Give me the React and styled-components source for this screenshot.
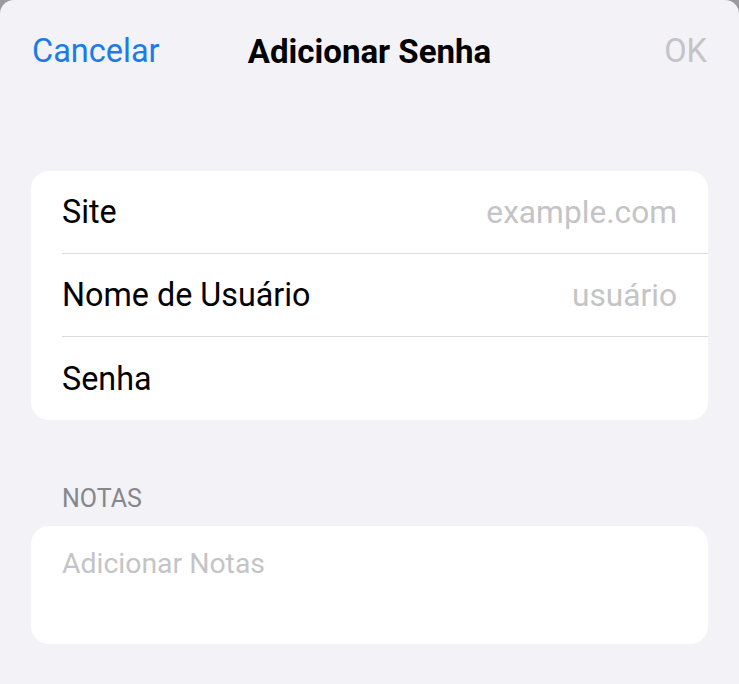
import React from "react";
import styled, { createGlobalStyle } from "styled-components";

const GlobalStyle = createGlobalStyle`
  html, body {
    margin: 0;
    padding: 0;
    background: #9a9a9f;
  }
  body {
    font-family: Roboto, "Liberation Sans", Arial, sans-serif;
    -webkit-font-smoothing: antialiased;
  }
`;

const Sheet = styled.div`
  min-height: 684px;
  background: #f2f2f7;
  border-radius: 14px 14px 0 0;
  display: flex;
  flex-direction: column;
  padding: 0 31px;
  box-sizing: border-box;
`;

const NavBar = styled.header`
  height: 102px;
  display: grid;
  grid-template-columns: 1fr auto 1fr;
  align-items: center;
  padding: 0 1px;
`;

const NavButton = styled.span`
  font-size: 32.5px;
  color: ${(p) => (p.disabled ? "#c4c4c7" : "#1a7bea")};
  justify-self: ${(p) => (p.right ? "end" : "start")};
`;

const Title = styled.h1`
  margin: 0;
  font-size: 33px;
  font-weight: 700;
  color: #000;
`;

const Card = styled.section`
  background: #fff;
  border-radius: 18px;
  overflow: hidden;
  margin-top: ${(p) => p.top || 0}px;
`;

const Row = styled.div`
  padding-left: 31px;
`;

const RowInner = styled.div`
  height: 83px;
  box-sizing: border-box;
  display: flex;
  align-items: center;
  justify-content: space-between;
  padding-right: 31px;
  border-bottom: ${(p) => (p.last ? "none" : "1px solid #dcdce0")};
  font-size: 32.3px;
  color: #000;
`;

const Placeholder = styled.span`
  color: #c4c4c7;
  font-size: 31.7px;
`;

const SectionLabel = styled.div`
  margin-top: 64px;
  padding-left: 31px;
  font-size: 25px;
  color: #86868b;
  height: 42px;
`;

const Notes = styled.div`
  height: 118px;
  box-sizing: border-box;
  padding: 21px 31px 0;
  font-size: 28.4px;
  color: #c4c4c7;
`;

const fields = [
  { label: "Site", placeholder: "example.com" },
  { label: "Nome de Usuário", placeholder: "usuário" },
  { label: "Senha", placeholder: "" },
];

export default function App() {
  return (
    <>
      <GlobalStyle />
      <Sheet>
        <NavBar>
          <NavButton>Cancelar</NavButton>
          <Title>Adicionar Senha</Title>
          <NavButton right disabled>
            OK
          </NavButton>
        </NavBar>
        <Card top={69}>
          {fields.map((f, i) => (
            <Row key={f.label}>
              <RowInner last={i === fields.length - 1}>
                <span>{f.label}</span>
                {f.placeholder && <Placeholder>{f.placeholder}</Placeholder>}
              </RowInner>
            </Row>
          ))}
        </Card>
        <SectionLabel>NOTAS</SectionLabel>
        <Card>
          <Notes>Adicionar Notas</Notes>
        </Card>
      </Sheet>
    </>
  );
}
